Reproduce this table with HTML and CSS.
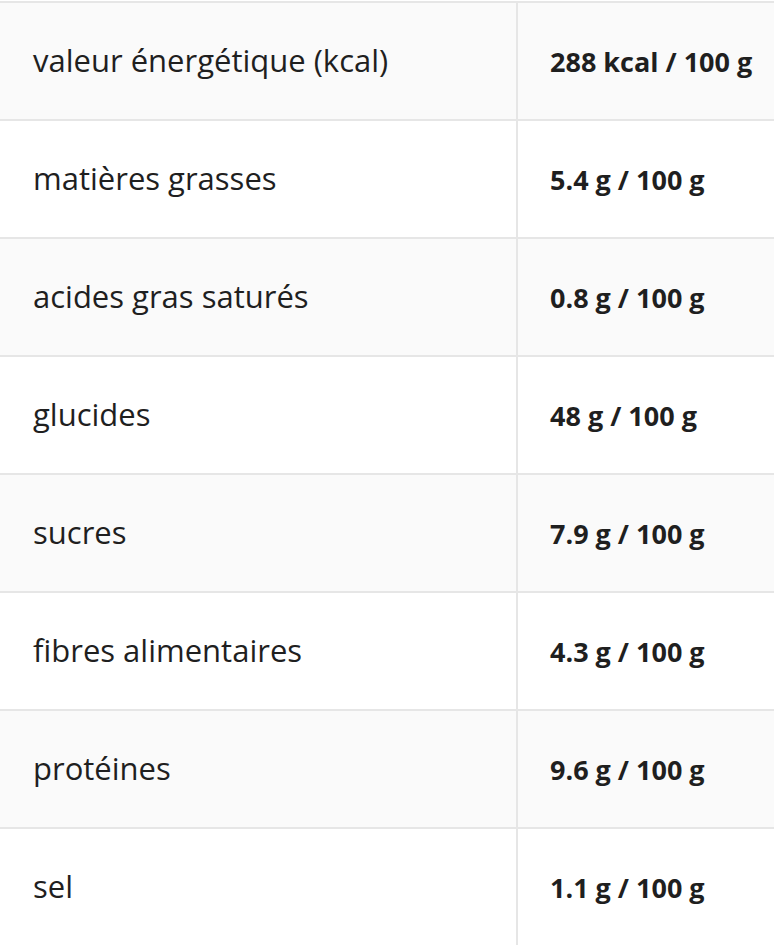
FILE: index.html
```html
<!DOCTYPE html>
<html lang="fr">
<head>
<meta charset="utf-8">
<title>Valeurs nutritionnelles</title>
<link rel="stylesheet" href="styles.css">
</head>
<body>
<table class="nutri">
  <tbody>
    <tr><td class="name">valeur énergétique (kcal)</td><td class="val">288 kcal / 100 g</td></tr>
    <tr><td class="name">matières grasses</td><td class="val">5.4 g / 100 g</td></tr>
    <tr><td class="name">acides gras saturés</td><td class="val">0.8 g / 100 g</td></tr>
    <tr><td class="name">glucides</td><td class="val">48 g / 100 g</td></tr>
    <tr><td class="name">sucres</td><td class="val">7.9 g / 100 g</td></tr>
    <tr><td class="name">fibres alimentaires</td><td class="val">4.3 g / 100 g</td></tr>
    <tr><td class="name">protéines</td><td class="val">9.6 g / 100 g</td></tr>
    <tr><td class="name">sel</td><td class="val">1.1 g / 100 g</td></tr>
  </tbody>
</table>
</body>
</html>
```
FILE: styles.css
```css
html, body {
  margin: 0;
  padding: 0;
  background: #ffffff;
}
body {
  font-family: "Open Sans", "Noto Sans", sans-serif;
  color: #1f1f1f;
  padding-top: 1px;
}
.nutri {
  width: 774px;
  border-collapse: collapse;
  table-layout: fixed;
}
.nutri tr:nth-child(odd) {
  background: #fafafa;
}
.nutri td {
  height: 116px;
  padding: 0;
  border-top: 2px solid #e6e6e6;
  border-bottom: 2px solid #e6e6e6;
  vertical-align: middle;
  white-space: nowrap;
  line-height: 1.2;
}
.nutri td.name {
  width: 483px;
  padding-left: 33px;
  border-right: 2px solid #e6e6e6;
  font-size: 31px;
}
.nutri td.val {
  height: 113px;
  padding-left: 32px;
  padding-top: 3px;
  font-size: 27px;
  font-weight: 700;
}
```
